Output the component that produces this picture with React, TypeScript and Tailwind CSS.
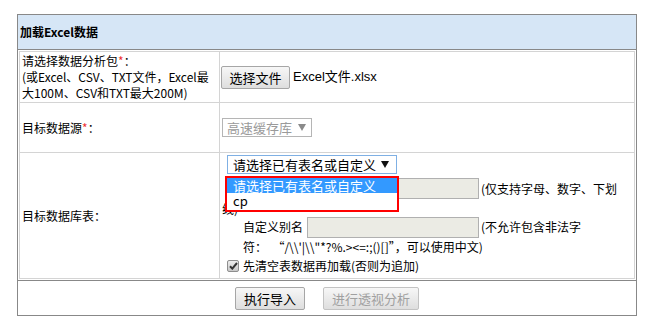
import React from 'react'

const cjk = "font-['Noto_Sans_CJK_SC',sans-serif]"

function Btn({ children, disabled, className = '' }: { children: React.ReactNode; disabled?: boolean; className?: string }) {
  return (
    <button
      disabled={disabled}
      className={`h-[23px] shrink-0 rounded-[2px] border bg-gradient-to-b from-[#f7f7f7] to-[#dedede] text-[13px] leading-none ${
        disabled ? 'border-[#c3c3c3] text-[#a0a0a0]' : 'border-[#a6a6a6] text-black'
      } ${className}`}
    >
      {children}
    </button>
  )
}

function Arrow({ gray }: { gray?: boolean }) {
  return (
    <svg width="8" height="7" viewBox="0 0 8 7" className="shrink-0">
      <path d="M0 0h8L4 7z" fill={gray ? '#8a8a8a' : '#111'} />
    </svg>
  )
}

export default function App() {
  const illegal = String.raw`“/\\'|\\"*?%.><=:;()[]”`

  return (
    <div className={`min-h-[328px] w-[651px] bg-white pl-[17px] pt-[14px] text-[12px] text-black ${cjk}`}>
      <div className="w-[620px] border border-[#888]">
        <div className="flex h-[35px] items-center border-b border-[#888] bg-[#d6e6f6] pl-[2px] font-bold">
          加载Excel数据
        </div>

        <div className="p-[1px]">
          <div className="border border-[#d4d4d4]">
            {/* 数据包 */}
            <div className="flex h-[51px] border-b border-[#d4d4d4]">
              <div className="flex w-[200px] shrink-0 items-center border-r border-[#d4d4d4] pl-[2px] leading-[16px]">
                <div>
                  请选择数据分析包<span className="text-[#e33]">*</span>：
                  <br />
                  (或Excel、CSV、TXT文件，Excel最
                  <br />
                  大100M、CSV和TXT最大200M)
                </div>
              </div>
              <div className="flex flex-1 items-center pl-[1px]">
                <Btn className="w-[69px]">选择文件</Btn>
                <span className="ml-[3px] font-['Liberation_Sans','Noto_Sans_CJK_SC',sans-serif] text-[13px]">
                  Excel文件.xlsx
                </span>
              </div>
            </div>

            {/* 数据源 */}
            <div className="flex h-[50px] border-b border-[#d4d4d4]">
              <div className="flex w-[200px] shrink-0 items-center border-r border-[#d4d4d4] pl-[2px]">
                目标数据源<span className="text-[#e33]">*</span>：
              </div>
              <div className="flex flex-1 items-center pl-[2px]">
                <div className="flex h-[19px] w-[90px] items-center justify-between border border-[#b5b5b5] pl-[4px] pr-[5px] text-[13px] text-[#9a9a9a]">
                  高速缓存库
                  <Arrow gray />
                </div>
              </div>
            </div>

            {/* 数据库表 */}
            <div className="flex h-[125px]">
              <div className="flex w-[200px] shrink-0 items-center border-r border-[#d4d4d4] pl-[2px]">
                目标数据库表：
              </div>
              <div className="flex-1 pl-[2px] pt-[2px]">
                <div className="relative ml-[5px] w-[170px]">
                  <div className="flex h-[19px] items-center justify-between border border-[#7fb0e4] pl-[5px] pr-[7px] text-[13px]">
                    请选择已有表名或自定义
                    <Arrow />
                  </div>
                  <div className="absolute left-[-2px] top-[21px] z-10 h-[36px] w-[174px] border-2 border-[#f00] bg-white text-[13px] leading-[15px]">
                    <div className="h-[15px] bg-[#3399ff] pl-[6px] text-white">请选择已有表名或自定义</div>
                    <div className="h-[15px] pl-[6px]">cp</div>
                  </div>
                </div>

                <div className="mt-[2px] flex h-[25px] items-center">
                  <span className="invisible ml-[21px] w-[60px]">自定义表名</span>
                  <span className="ml-[4px] h-[21px] w-[172px] border border-[#b0b0b0] bg-[#ebebe4]" />
                  <span className="ml-[2px]">(仅支持字母、数字、下划</span>
                </div>
                <div className="flex h-[15px] items-center">线)</div>

                <div className="flex h-[22px] items-center">
                  <span className="ml-[21px] w-[60px]">自定义别名</span>
                  <span className="ml-[4px] h-[21px] w-[172px] border border-[#b0b0b0] bg-[#ebebe4]" />
                  <span className="ml-[2px]">(不允许包含非法字</span>
                </div>
                <div className="flex h-[18px] items-center whitespace-pre pl-[21px]">
                  符：  {illegal}，可以使用中文)
                </div>

                <div className="flex h-[20px] items-center">
                  <span className="ml-[5px] flex h-[12px] w-[12px] items-center justify-center rounded-[2px] border border-[#8e8e8e] bg-gradient-to-b from-[#ededed] to-[#c9c9c9]">
                    <svg width="9" height="8" viewBox="0 0 9 8">
                      <path d="M1 4.2l2.3 2.4L8 1" fill="none" stroke="#333" strokeWidth="2" />
                    </svg>
                  </span>
                  <span className="ml-[4px]">先清空表数据再加载(否则为追加)</span>
                </div>
              </div>
            </div>
          </div>
        </div>

        <div className="flex h-[35px] items-center justify-center gap-[18px] border-t border-[#888]">
          <Btn className="w-[70px]">执行导入</Btn>
          <Btn disabled className="w-[96px]">进行透视分析</Btn>
        </div>
      </div>
    </div>
  )
}
